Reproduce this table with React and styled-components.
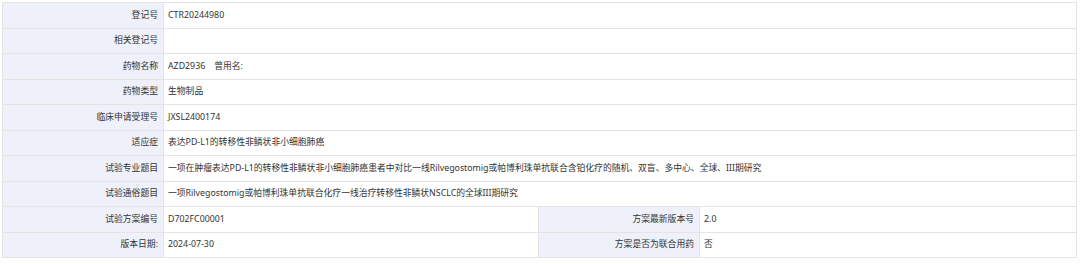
import React from "react";
import styled, { createGlobalStyle } from "styled-components";

const Global = createGlobalStyle`
  html, body { margin: 0; padding: 0; background: #ffffff; }
  body { font-family: "Noto Sans", "Noto Sans CJK SC", sans-serif; }
`;

const Wrap = styled.div`
  padding: 2px 4px 0 2px;
`;

const Table = styled.table`
  width: 1074px;
  border-collapse: collapse;
  table-layout: fixed;
  font-family: "Noto Sans", "Noto Sans CJK SC", sans-serif;
  font-size: 8.8px;
  color: #333333;
`;

const Row = styled.tr`
  height: 25.5px;
`;

const Label = styled.td`
  background: #eef1fa;
  border: 1px solid #e4e4e4;
  text-align: right;
  padding: 0 5px 0 0;
  white-space: nowrap;
  vertical-align: middle;
  line-height: 1;
`;

const Value = styled.td`
  background: #ffffff;
  border: 1px solid #e4e4e4;
  text-align: left;
  padding: 0 0 0 4px;
  white-space: nowrap;
  vertical-align: middle;
  line-height: 1;
`;

const Gap = styled.span`
  display: inline-block;
  width: 9px;
`;

const full = [
  ["登记号", "CTR20244980"],
  ["相关登记号", ""],
  ["药物名称", <>AZD2936<Gap />曾用名:</>],
  ["药物类型", "生物制品"],
  ["临床申请受理号", "JXSL2400174"],
  ["适应症", "表达PD-L1的转移性非鳞状非小细胞肺癌"],
  ["试验专业题目", "一项在肿瘤表达PD-L1的转移性非鳞状非小细胞肺癌患者中对比一线Rilvegostomig或帕博利珠单抗联合含铂化疗的随机、双盲、多中心、全球、III期研究"],
  ["试验通俗题目", "一项Rilvegostomig或帕博利珠单抗联合化疗一线治疗转移性非鳞状NSCLC的全球III期研究"],
];

const split = [
  ["试验方案编号", "D702FC00001", "方案最新版本号", "2.0"],
  ["版本日期:", "2024-07-30", "方案是否为联合用药", "否"],
];

export default function App() {
  return (
    <Wrap>
      <Global />
      <Table>
        <colgroup>
          <col style={{ width: 161 }} />
          <col style={{ width: 375 }} />
          <col style={{ width: 161 }} />
          <col style={{ width: 377 }} />
        </colgroup>
        <tbody>
          {full.map(([k, v], i) => (
            <Row key={i}>
              <Label>{k}</Label>
              <Value colSpan={3}>{v}</Value>
            </Row>
          ))}
          {split.map(([a, b, c, d], i) => (
            <Row key={"s" + i}>
              <Label>{a}</Label>
              <Value>{b}</Value>
              <Label>{c}</Label>
              <Value>{d}</Value>
            </Row>
          ))}
        </tbody>
      </Table>
    </Wrap>
  );
}
